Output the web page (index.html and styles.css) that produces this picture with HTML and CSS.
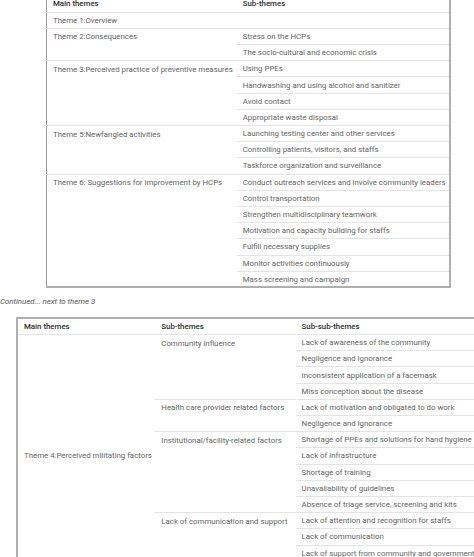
FILE: index.html
```html
<!DOCTYPE html>
<html>
<head>
<meta charset="utf-8">
<link rel="stylesheet" href="styles.css">
</head>
<body>
<div class="page">
  <table class="tbl tbl-one">
    <colgroup><col class="c-main1"><col class="c-sub1"></colgroup>
    <thead>
      <tr><th>Main themes</th><th>Sub-themes</th></tr>
    </thead>
    <tbody>
      <tr><td>Theme 1:Overview</td><td></td></tr>
      <tr><td rowspan="2" class="top">Theme 2:Consequences</td><td>Stress on the HCPs</td></tr>
      <tr><td>The socio-cultural and economic crisis</td></tr>
      <tr><td rowspan="4" class="top">Theme 3:Perceived practice of preventive measures</td><td>Using PPEs</td></tr>
      <tr><td>Handwashing and using alcohol and sanitizer</td></tr>
      <tr><td>Avoid contact</td></tr>
      <tr><td>Appropriate waste disposal</td></tr>
      <tr><td rowspan="3" class="top">Theme 5:Newfangled activities</td><td>Launching testing center and other services</td></tr>
      <tr><td>Controlling patients, visitors, and staffs</td></tr>
      <tr><td>Taskforce organization and surveillance</td></tr>
      <tr><td rowspan="7" class="top">Theme 6: Suggestions for improvement by HCPs</td><td>Conduct outreach services and involve community leaders</td></tr>
      <tr><td>Control transportation</td></tr>
      <tr><td>Strengthen multidisciplinary teamwork</td></tr>
      <tr><td>Motivation and capacity building for staffs</td></tr>
      <tr><td>Fulfill necessary supplies</td></tr>
      <tr><td>Monitor activities continuously</td></tr>
      <tr><td>Mass screening and campaign</td></tr>
    </tbody>
  </table>

  <p class="caption">Continued... next to theme 3</p>

  <table class="tbl tbl-two">
    <colgroup><col class="c-main2"><col class="c-sub2"><col class="c-subsub2"></colgroup>
    <thead>
      <tr><th>Main themes</th><th>Sub-themes</th><th>Sub-sub-themes</th></tr>
    </thead>
    <tbody>
      <tr><td rowspan="15" class="mid">Theme 4:Perceived militating factors</td><td rowspan="4" class="top">Community influence</td><td>Lack of awareness of the community</td></tr>
      <tr><td>Negligence and ignorance</td></tr>
      <tr><td>Inconsistent application of a facemask</td></tr>
      <tr><td>Miss conception about the disease</td></tr>
      <tr><td rowspan="2" class="top">Health care provider related factors</td><td>Lack of motivation and obligated to do work</td></tr>
      <tr><td>Negligence and ignorance</td></tr>
      <tr><td rowspan="5" class="top">Institutional/facility-related factors</td><td>Shortage of PPEs and solutions for hand hygiene</td></tr>
      <tr><td>Lack of infrastructure</td></tr>
      <tr><td>Shortage of training</td></tr>
      <tr><td>Unavailability of guidelines</td></tr>
      <tr><td>Absence of triage service, screening and kits</td></tr>
      <tr><td rowspan="4" class="top">Lack of communication and support</td><td>Lack of attention and recognition for staffs</td></tr>
      <tr><td>Lack of communication</td></tr>
      <tr><td>Lack of support from community and government</td></tr>
      <tr><td>&nbsp;</td></tr>
    </tbody>
  </table>
</div>
</body>
</html>
```

FILE: styles.css
```css
html, body {
  margin: 0;
  padding: 0;
  background: #ffffff;
  overflow: hidden;
}

body {
  font-family: Roboto, "Liberation Sans", Arial, sans-serif;
  font-size: 7.85px;
  color: #646464;
}

.page {
  width: 474px;
  height: 557px;
  overflow: hidden;
}

.tbl {
  border-collapse: collapse;
  table-layout: fixed;
  background: #fff;
}

.tbl th,
.tbl td {
  height: 16.2px;
  padding: 0 5px 0 6px;
  box-sizing: border-box;
  border-bottom: 1px solid #e4e4e4;
  text-align: left;
  vertical-align: middle;
  white-space: nowrap;
}

.tbl th {
  font-weight: 500;
  color: #2e2e2e;
}

.tbl td.top { vertical-align: top; padding-top: 3.5px; }
.tbl td.mid { vertical-align: middle; }

.tbl-one {
  margin: -4px 0 0 46px;
  width: 405px;
  border-left: 1px solid #9a9a9a;
  border-right: 2px solid #b0b0b0;
  border-bottom: 2px solid #b0b0b0;
}

.c-main1 { width: 190px; }
.c-sub1 { width: 213px; }

.caption {
  margin: 9px 0 0 0;
  height: 20px;
  line-height: 10px;
  font-style: italic;
  color: #555;
}

.tbl-two {
  margin-left: 16px;
  width: 480px;
  border-left: 2px solid #b0b0b0;
  border-top: 2px solid #b0b0b0;
}

.c-main2 { width: 138px; }
.c-sub2 { width: 140px; }
.c-subsub2 { width: 200px; }
```
